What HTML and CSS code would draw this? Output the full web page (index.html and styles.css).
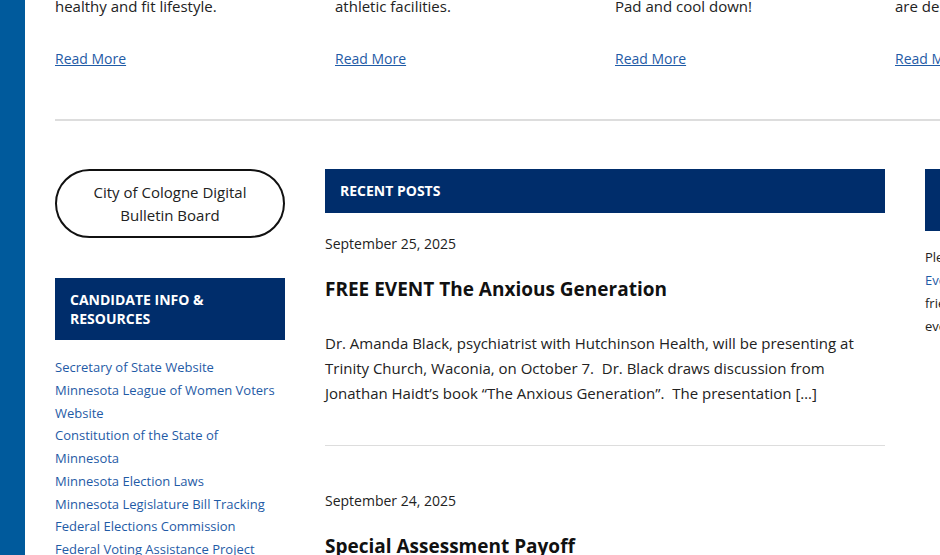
FILE: index.html
```html
<!DOCTYPE html>
<html lang="en">
<head>
    <meta charset="UTF-8">
    <meta name="viewport" content="width=device-width, initial-scale=1.0">
    <title>City of Cologne</title>
    <link rel="stylesheet" href="styles.css">
</head>
<body>

    <div class="edge"></div>

    <div class="page">

        <div class="features">
            <div class="feature">
                <p>healthy and fit lifestyle.</p>
                <a href="#">Read More</a>
            </div>
            <div class="feature">
                <p>athletic facilities.</p>
                <a href="#">Read More</a>
            </div>
            <div class="feature">
                <p>Pad and cool down!</p>
                <a href="#">Read More</a>
            </div>
            <div class="feature">
                <p>are designed for everyone.</p>
                <a href="#">Read More</a>
            </div>
        </div>

        <hr class="divider">

        <div class="columns">

            <div class="sidebar">
                <a href="#" class="pill">City of Cologne Digital Bulletin Board</a>

                <h3 class="widget-title">Candidate Info &amp; Resources</h3>
                <ul class="links">
                    <li><a href="#">Secretary of State Website</a></li>
                    <li><a href="#">Minnesota League of Women Voters Website</a></li>
                    <li><a href="#">Constitution of the State of Minnesota</a></li>
                    <li><a href="#">Minnesota Election Laws</a></li>
                    <li><a href="#">Minnesota Legislature Bill Tracking</a></li>
                    <li><a href="#">Federal Elections Commission</a></li>
                    <li><a href="#">Federal Voting Assistance Project</a></li>
                </ul>
            </div>

            <div class="posts">
                <h3 class="widget-title">Recent Posts</h3>

                <div class="post">
                    <div class="post-date">September 25, 2025</div>
                    <h2 class="post-title">FREE EVENT The Anxious Generation</h2>
                    <p>Dr. Amanda Black, psychiatrist with Hutchinson Health, will be presenting at Trinity Church, Waconia, on October 7.&nbsp; Dr. Black draws discussion from Jonathan Haidt’s book “The Anxious Generation”.&nbsp; The presentation […]</p>
                </div>

                <div class="post">
                    <div class="post-date">September 24, 2025</div>
                    <h2 class="post-title">Special Assessment Payoff</h2>
                    <p>Property owners with special assessments may pay the balance in full before November.</p>
                </div>
            </div>

            <div class="aside">
                <h3 class="widget-title">Upcoming Community Events</h3>
                <p class="note">Please see our<br><a href="#">Events calendar</a> for<br>friendly community<br>events and meetings.</p>
            </div>

        </div>
    </div>

</body>
</html>
```

FILE: styles.css
```css
html, body {
    margin: 0;
    padding: 0;
}
body {
    font-family: "Open Sans", Arial, sans-serif;
    color: #222;
    background: #fff;
    overflow: hidden;
    display: flex;
}
a {
    color: #1f5ba6;
}
.edge {
    width: 25px;
    flex-shrink: 0;
    min-height: 100vh;
    background-color: #005a9c;
}
.page {
    padding-left: 30px;
    width: 1100px;
    flex-shrink: 0;
}
.features {
    display: grid;
    grid-template-columns: repeat(4, 240px);
    gap: 40px;
    margin-top: -6px;
    font-size: 15px;
    line-height: 25px;
}
.feature p {
    margin: 0 0 27px;
}
.feature a {
    font-size: 14px;
}
.divider {
    border: none;
    border-top: 2px solid #ddd;
    margin: 48px 0 48px;
}
.columns {
    display: grid;
    grid-template-columns: 230px 560px 230px;
    gap: 40px;
}
.widget-title {
    margin: 0;
    background-color: #002d6b;
    color: #fff;
    font-size: 14px;
    line-height: 20px;
    font-weight: 700;
    text-transform: uppercase;
    padding: 12px 15px;
}
.sidebar .widget-title,
.aside .widget-title {
    padding: 11px 15px;
}
.sidebar .widget-title {
    line-height: 19px;
    padding: 11.5px 15px 12.5px;
}
.pill {
    display: block;
    border: 2px solid #111;
    border-radius: 36px;
    padding: 9.5px 20px;
    text-align: center;
    color: #222;
    text-decoration: none;
    font-size: 15px;
    line-height: 23px;
    margin-bottom: 40px;
}
.links {
    list-style: none;
    margin: 16px 0 0;
    padding: 0 6px 0 0;
    font-size: 13px;
    line-height: 22.75px;
}
.links a {
    text-decoration: none;
}
.post {
    border-bottom: 1px solid #ddd;
    padding: 21px 0 39px;
    margin-bottom: 24px;
}
.post-date {
    font-size: 14px;
    line-height: 20px;
}
.post-title {
    margin: 21px 0 28px;
    font-size: 19px;
    line-height: 28px;
    font-weight: 700;
    color: #111;
}
.post p {
    margin: 0;
    font-size: 15px;
    line-height: 25px;
}
.note {
    margin: 15px 0 0;
    font-size: 13px;
    line-height: 23px;
}
.note a {
    text-decoration: none;
}
```
